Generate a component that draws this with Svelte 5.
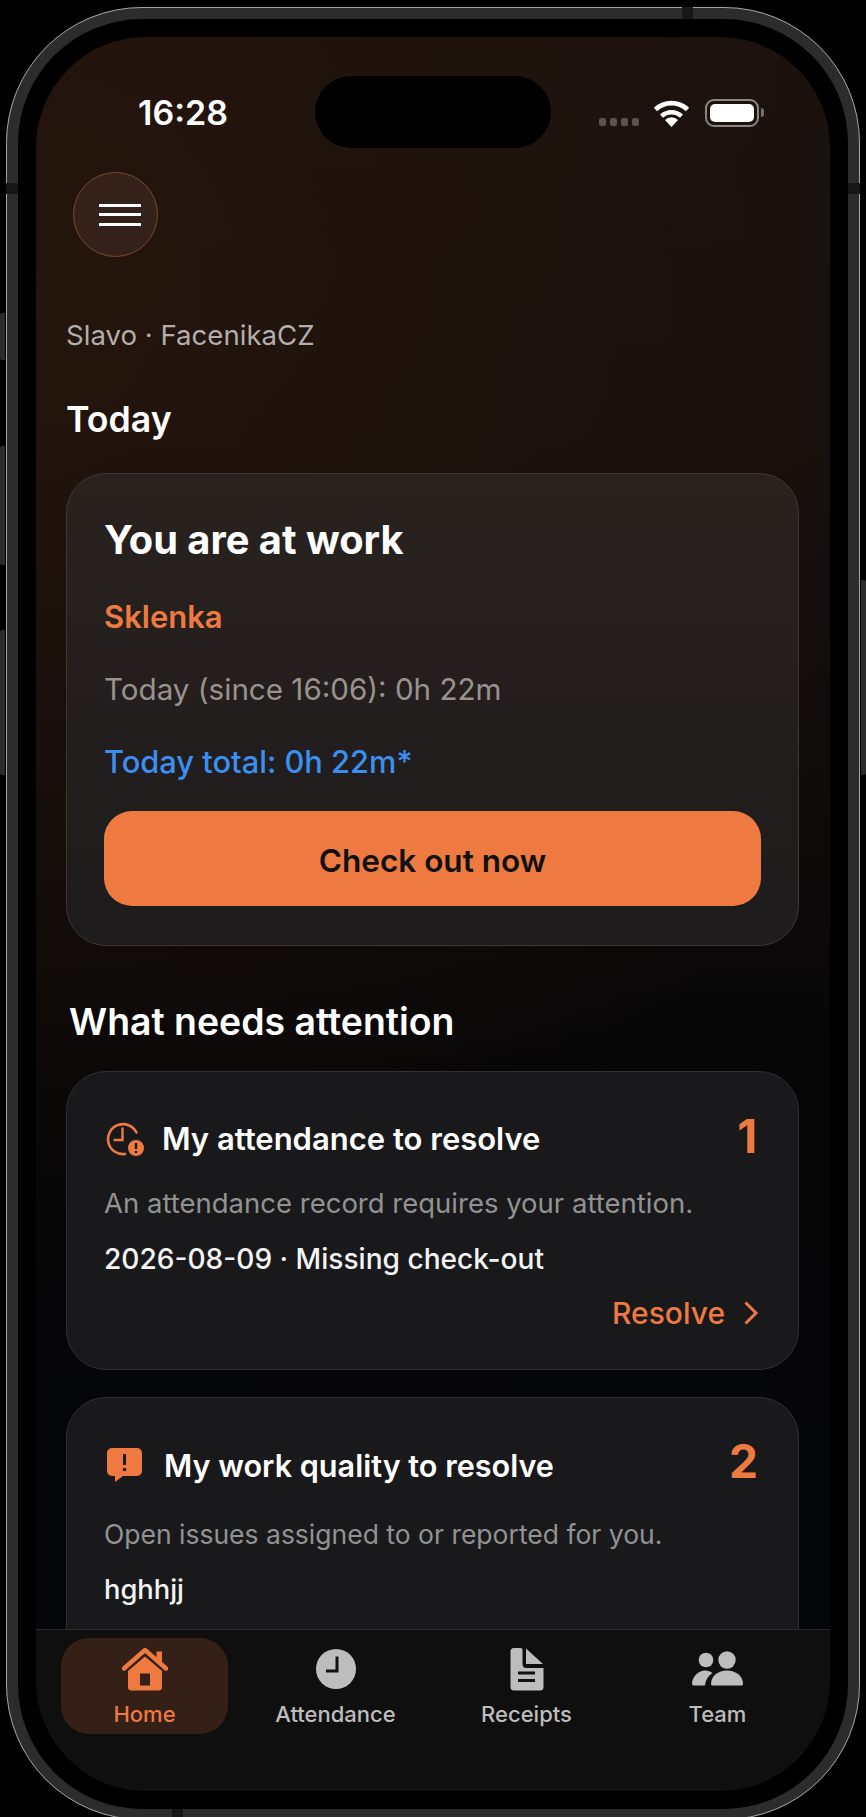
<script>
	const tabs = [
		{ label: 'Home', active: true },
		{ label: 'Attendance' },
		{ label: 'Receipts' },
		{ label: 'Team' }
	]
</script>

<main class="stage">
	<span class="side left a"></span>
	<span class="side left b"></span>
	<span class="side left c"></span>
	<span class="side right d"></span>

	<div class="phone">
		<span class="band bl"></span>
		<span class="band br"></span>
		<span class="band bt"></span>
		<span class="band bb"></span>
		<div class="screen">
			<div class="island"></div>
			<header class="status">
				<span class="time">16:28</span>
				<div class="indicators">
					<div class="dots"><i></i><i></i><i></i><i></i></div>
					<svg class="wifi" viewBox="0 0 36 28" width="37" height="28">
						<path d="M18 28l-6.500-7a9 9 0 0 1 13 0z" fill="#fff" />
						<path d="M8 17.200a14.600 14.600 0 0 1 20 0" fill="none" stroke="#fff" stroke-width="4.400" />
						<path d="M2 10.400a23.400 23.400 0 0 1 32 0" fill="none" stroke="#fff" stroke-width="4.800" />
					</svg>
					<div class="battery"><span class="level"></span></div>
					<span class="cap"></span>
				</div>
			</header>

			<div class="content">
				<button class="menu" aria-label="Menu">
					<span></span><span></span><span></span>
				</button>
				<p class="who">Slavo · FacenikaCZ</p>
				<h2 class="today">Today</h2>

				<section class="card hero">
					<h1>You are at work</h1>
					<p class="site">Sklenka</p>
					<p class="since">Today (since 16:06): 0h 22m</p>
					<p class="total">Today total: 0h 22m*</p>
					<button class="checkout">Check out now</button>
				</section>

				<h2 class="attention">What needs attention</h2>

				<section class="card todo first">
					<div class="row">
						<svg class="ico" viewBox="0 0 40 34" width="40" height="34">
							<path d="M31.500 10.500A15 15 0 1 0 20 32" fill="none" stroke="#ee7a41" stroke-width="2.600" stroke-linecap="round" />
							<path d="M17.500 5.500v12.500H8.500" fill="none" stroke="#ee7a41" stroke-width="2.400" />
							<circle cx="31" cy="26" r="8" fill="#ee7a41" />
							<path d="M31 21v6" stroke="#1a1a1c" stroke-width="2.400" />
							<circle cx="31" cy="30" r="1.300" fill="#1a1a1c" />
						</svg>
						<h3>My attendance to resolve</h3>
						<span class="count">1</span>
					</div>
					<p class="desc">An attendance record requires your attention.</p>
					<p class="line">2026-08-09 · Missing check-out</p>
					<div class="action">
						<span>Resolve</span>
						<svg viewBox="0 0 16 26" width="16" height="26">
							<path d="M2.500 2.500L13 13 2.500 23.500" fill="none" stroke="#ee7a41" stroke-width="3" />
						</svg>
					</div>
				</section>

				<section class="card todo second">
					<div class="row">
						<svg class="ico" viewBox="0 0 40 34" width="40" height="34">
							<path d="M6 0h25a5 5 0 0 1 5 5v18a5 5 0 0 1-5 5H17l-8 6v-6H6a5 5 0 0 1-5-5V5a5 5 0 0 1 5-5z" fill="#ee7a41" />
							<path d="M18.500 6v11" stroke="#1a1a1c" stroke-width="3" />
							<circle cx="18.500" cy="21.500" r="1.800" fill="#1a1a1c" />
						</svg>
						<h3>My work quality to resolve</h3>
						<span class="count">2</span>
					</div>
					<p class="desc">Open issues assigned to or reported for you.</p>
					<p class="line">hghhjj</p>
				</section>
			</div>

			<nav class="tabbar">
				{#each tabs as tab}
					<div class="tab" class:active={tab.active}>
						{#if tab.label === 'Home'}
							<svg viewBox="0 0 46 44" width="46" height="44">
								<path d="M2 21.500L23 3l21 18.500" fill="none" stroke="#ee7a41" stroke-width="4.400" stroke-linecap="round" stroke-linejoin="round" />
								<path d="M34.500 4.500h5.500v13l-5.500-5z" fill="#ee7a41" />
								<path d="M23 9.500l17 14.500V40a3.500 3.500 0 0 1-3.500 3.500h-27A3.500 3.500 0 0 1 6 40V24zM18 26.500v12h10v-12z" fill="#ee7a41" fill-rule="evenodd" />
							</svg>
						{:else if tab.label === 'Attendance'}
							<svg viewBox="0 0 46 44" width="46" height="44">
								<circle cx="23" cy="22" r="20" fill="#bdbdbd" />
								<path d="M24 9.500V24H13" fill="none" stroke="#111" stroke-width="3" />
							</svg>
						{:else if tab.label === 'Receipts'}
							<svg viewBox="0 0 46 44" width="46" height="44">
								<path d="M10 1h6.500a2 2 0 0 1 2 2v14a4 4 0 0 0 4 4h17v19a3.500 3.500 0 0 1-3.500 3.500H10A3.500 3.500 0 0 1 6.500 40V4.500A3.500 3.500 0 0 1 10 1z" fill="#bdbdbd" />
								<path d="M22 1.500l17 15.500H22z" fill="#bdbdbd" />
								<path d="M14 26h17M14 33.500h17" stroke="#111" stroke-width="2.800" />
							</svg>
						{:else}
							<svg viewBox="0 0 54 44" width="54" height="44">
								<circle cx="15" cy="13" r="7.300" fill="#bdbdbd" />
								<circle cx="36" cy="13" r="8.700" fill="#bdbdbd" />
								<path d="M1 37c0-7 6-13.500 13-13.500 3 0 5.500 1 7.500 2.500C17 29 14.500 33 14 38.500H3a2 2 0 0 1-2-1.500z" fill="#bdbdbd" />
								<path d="M20 37c0-8 7-13.500 16-13.500s16 5.500 16 13.500a1.500 1.500 0 0 1-1.500 1.500h-29a1.500 1.500 0 0 1-1.500-1.500z" fill="#bdbdbd" />
							</svg>
						{/if}
						<span>{tab.label}</span>
					</div>
				{/each}
			</nav>
		</div>
	</div>
</main>

<style>
	:global(body) {
		margin: 0;
		background: #000;
	}
	.stage {
		position: relative;
		width: 866px;
		height: 1817px;
		padding: 7px 6px 0;
		box-sizing: border-box;
		overflow: hidden;
		background: #000;
		font-family: Inter, "Liberation Sans", sans-serif;
		color: #fff;
	}
	.side {
		position: absolute;
		width: 5px;
		background: #2b2b2b;
	}
	.side.left { left: 0; border-radius: 2px 0 0 2px; }
	.side.right { right: 0; border-radius: 0 2px 2px 0; }
	.a { top: 313px; height: 47px; }
	.b { top: 446px; height: 119px; }
	.c { top: 630px; height: 145px; }
	.d { top: 580px; height: 195px; }

	.phone {
		position: relative;
		height: 1813px;
		box-sizing: border-box;
		padding: 18px;
		border: 12px solid #2c2c2d;
		border-bottom-width: 11px;
		border-radius: 136px;
		background: #000;
		outline: 1.500px solid #a2a2a2;
		outline-offset: -1.500px;
	}
	.band {
		position: absolute;
		background: #171717;
	}
	.bl { left: -12px; top: 164px; width: 12px; height: 11px; }
	.br { right: -12px; top: 164px; width: 12px; height: 11px; }
	.bt { right: 155px; top: -12px; width: 11px; height: 12px; }
	.bb { left: 154px; bottom: -11px; width: 11px; height: 11px; }

	.screen {
		position: relative;
		height: 100%;
		border-radius: 110px;
		overflow: hidden;
		display: flex;
		flex-direction: column;
		background:
			radial-gradient(ellipse 900px 1000px at 0 15%, rgba(48, 26, 10, 0.5), rgba(48, 26, 10, 0) 100%),
			linear-gradient(180deg, #1a110e 0, #18100e 22%, #0f0b0b 42%, #060607 60%, #050608 100%);
	}
	.island {
		position: absolute;
		left: 279px;
		top: 39px;
		width: 236px;
		height: 72px;
		border-radius: 36px;
		background: #000;
	}
	.status {
		flex: none;
		height: 111px;
		position: relative;
		display: flex;
		justify-content: space-between;
		padding: 0 66px 0 102px;
	}
	.time {
		font-size: 34px;
		font-weight: 600;
		line-height: 40px;
		margin-top: 56px;
	}
	.indicators {
		display: flex;
		align-items: flex-start;
		margin-top: 62px;
	}
	.dots {
		display: flex;
		gap: 4px;
		margin-top: 19px;
		margin-right: 14px;
	}
	.dots i {
		width: 7px;
		height: 8px;
		border-radius: 2px;
		background: #5a5352;
	}
	.battery {
		width: 54px;
		height: 28px;
		box-sizing: border-box;
		margin-left: 15px;
		padding: 3px;
		border: 2px solid #8a8684;
		border-radius: 9px;
	}
	.level {
		display: block;
		height: 100%;
		border-radius: 5px;
		background: #fff;
	}
	.cap {
		width: 3px;
		height: 9px;
		margin: 9px 0 0 2px;
		border-radius: 0 3px 3px 0;
		background: #77716e;
	}
	.content {
		flex: 1;
		min-height: 0;
		overflow: hidden;
		padding: 0 31px 0 30px;
	}
	p, h1, h2, h3 {
		margin: 0;
	}
	.menu {
		display: flex;
		flex-direction: column;
		justify-content: center;
		align-items: center;
		gap: 6.500px;
		width: 85px;
		height: 85px;
		margin: 24px 0 0 7px;
		padding: 0;
		border: 1px solid #7a4a30;
		border-radius: 50%;
		background: #34221a;
	}
	.menu span {
		width: 42px;
		height: 3px;
		margin-left: 9px;
		background: #fff;
	}
	.who {
		margin-top: 62px;
		font-size: 27.600px;
		line-height: 32px;
		color: #b3aeac;
	}
	.today {
		margin-top: 46px;
		font-size: 35.700px;
		font-weight: 600;
		line-height: 44px;
	}
	.card {
		box-sizing: border-box;
		border: 1.500px solid #303032;
		border-radius: 40px;
		padding: 0 37px;
		background: #19191b;
	}
	.hero {
		height: 473px;
		margin-top: 32px;
		padding-top: 42px;
		border-color: #3e3835;
		background: linear-gradient(180deg, #29221f, #1d1b1c);
	}
	.hero h1 {
		font-size: 39.800px;
		font-weight: 700;
		line-height: 48px;
	}
	.site {
		margin-top: 34px;
		font-size: 31px;
		font-weight: 600;
		line-height: 38px;
		color: #ee7a41;
	}
	.since {
		margin-top: 34px;
		font-size: 29.600px;
		line-height: 38px;
		color: #98938f;
	}
	.total {
		margin-top: 35px;
		font-size: 30.800px;
		font-weight: 500;
		line-height: 38px;
		color: #3a8ff0;
	}
	.checkout {
		display: block;
		width: 100%;
		height: 95px;
		margin-top: 30px;
		padding: 5px 0 0;
		border: 0;
		border-radius: 28px;
		background: #ee7a41;
		font: 600 31.500px/1 Inter, "Liberation Sans", sans-serif;
		color: #111;
	}
	.attention {
		margin: 53px 0 0 3px;
		font-size: 37.400px;
		font-weight: 600;
		line-height: 46px;
	}
	.first {
		height: 299px;
		margin-top: 26px;
		padding-top: 50px;
	}
	.second {
		height: 299px;
		margin-top: 27px;
		padding-top: 51px;
	}
	.row {
		display: flex;
		align-items: center;
		height: 34px;
	}
	.ico {
		flex: none;
		margin: 0 17px 0 1px;
	}
	.second .ico {
		margin: -2px 18px 0 2px;
	}
	.row h3 {
		flex: 1;
		font-size: 31px;
		font-weight: 600;
		line-height: 38px;
	}
	.second h3 {
		font-size: 30.600px;
	}
	.count {
		margin: -6px 4px 0 0;
		font-size: 46px;
		font-weight: 700;
		line-height: 46px;
		color: #ee7a41;
	}
	.second .count {
		margin: -10px 3px 0 0;
	}
	.desc {
		margin-top: 29px;
		font-size: 27.500px;
		line-height: 36px;
		color: #929292;
	}
	.second .desc {
		margin-top: 33px;
		font-size: 26.500px;
	}
	.line {
		margin-top: 20px;
		font-size: 28.100px;
		font-weight: 500;
		line-height: 36px;
		color: #f4f4f4;
	}
	.second .line {
		font-size: 27.300px;
	}
	.action {
		display: flex;
		justify-content: flex-end;
		align-items: center;
		gap: 18px;
		margin: 17px 2px 0 0;
		font-size: 30px;
		font-weight: 500;
		line-height: 38px;
		color: #ee7a41;
	}
	.tabbar {
		flex: none;
		box-sizing: border-box;
		height: 162px;
		display: grid;
		grid-template-columns: repeat(4, 167px);
		gap: 24px;
		padding: 8px 0 0 25px;
		border-top: 1.500px solid #2a2a2c;
		background: #0f0f10;
	}
	.tab {
		height: 96px;
		box-sizing: border-box;
		padding-top: 9px;
		display: flex;
		flex-direction: column;
		align-items: center;
		border-radius: 28px;
		font-size: 22px;
		font-weight: 500;
		line-height: 30px;
		color: #bdbdbd;
	}
	.tab span {
		margin-top: 8px;
	}
	.tab.active {
		background: #342016;
		color: #ee7a41;
	}
</style>
